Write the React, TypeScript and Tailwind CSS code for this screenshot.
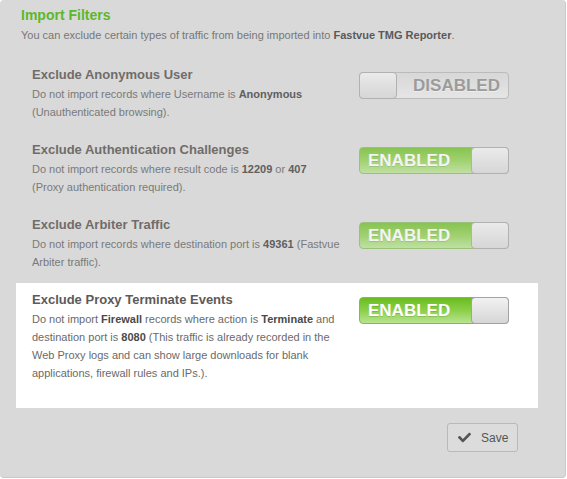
import React from 'react';
import { FaCheck } from 'react-icons/fa';

interface Filter {
  title: string;
  desc: React.ReactNode;
  enabled: boolean;
}

const filters: Filter[] = [
  {
    title: 'Exclude Anonymous User',
    desc: (
      <>
        Do not import records where Username is <b>Anonymous</b> (Unauthenticated browsing).
      </>
    ),
    enabled: false,
  },
  {
    title: 'Exclude Authentication Challenges',
    desc: (
      <>
        Do not import records where result code is <b>12209</b> or <b>407</b>
        <br />
        (Proxy authentication required).
      </>
    ),
    enabled: true,
  },
  {
    title: 'Exclude Arbiter Traffic',
    desc: (
      <>
        Do not import records where destination port is <b>49361</b> (Fastvue Arbiter traffic).
      </>
    ),
    enabled: true,
  },
  {
    title: 'Exclude Proxy Terminate Events',
    desc: (
      <>
        Do not import <b>Firewall</b> records where action is <b>Terminate</b> and destination port is{' '}
        <b>8080</b> (This traffic is already recorded in the Web Proxy logs and can show large downloads
        for blank applications, firewall rules and IPs.).
      </>
    ),
    enabled: true,
  },
];

const Knob = () => (
  <div className="w-[38px] h-[27px] -my-px rounded-[4px] border border-[#a3a3a3] bg-gradient-to-b from-[#f2f2f2] to-[#d6d6d6]" />
);

const Toggle = ({ enabled }: { enabled: boolean }) =>
  enabled ? (
    <div className="flex items-center w-[150px] h-[27px] rounded-[4px] border border-[#84b957] bg-gradient-to-b from-[#68bd1c] via-[#8ccf48] to-[#b7e48f]">
      <span className="flex-1 pl-[8px] text-[17px] leading-none font-bold text-white [text-shadow:0_1px_0_rgba(0,0,0,0.15)]">
        ENABLED
      </span>
      <div className="-mr-px">
        <Knob />
      </div>
    </div>
  ) : (
    <div className="flex items-center w-[150px] h-[27px] rounded-[4px] border border-[#b0b0b0] bg-gradient-to-b from-[#d8d8d8] to-[#ebebeb]">
      <div className="-ml-px">
        <Knob />
      </div>
      <span className="flex-1 text-right pr-[8px] text-[17px] leading-none font-bold text-[#858585] [text-shadow:0_1px_0_rgba(255,255,255,0.7)]">
        DISABLED
      </span>
    </div>
  );

const FilterRow = ({ filter, highlight }: { filter: Filter; highlight?: boolean }) => (
  <div
    className={
      highlight
        ? 'flex w-[522px] bg-white pl-4 pt-2 pb-[26px]'
        : 'flex w-[522px] h-[75px] pl-4 pt-2 opacity-[0.85]'
    }
  >
    <div className="w-[310px]">
      <div className="text-[13px] leading-[18px] font-bold text-[#5e5a57]">{filter.title}</div>
      <div className="mt-px text-[11px] leading-[18px] text-[#6a6a6a] [&_b]:text-[#4a4a4a]">
        {filter.desc}
      </div>
    </div>
    <div className={highlight ? 'ml-[17px] mt-[6px]' : 'ml-[17px] mt-[6px] opacity-[0.85]'}>
      <Toggle enabled={filter.enabled} />
    </div>
  </div>
);

export default function App() {
  return (
    <div className="w-[567px] h-[479px] bg-white font-['Liberation_Sans',Arial,sans-serif]">
      <div className="w-[566px] h-[478px] bg-[#d9d9d9] rounded-[4px] border-r border-b border-[#c9c9c9] pl-4 pt-[6px]">
        <div className="pl-[5px]">
          <h1 className="text-[14px] leading-[18px] font-bold text-[#5cb82a]">Import Filters</h1>
          <p className="mt-[2px] text-[11px] leading-[18px] text-[#777]">
            You can exclude certain types of traffic from being imported into{' '}
            <b className="text-[#5a5a5a]">Fastvue TMG Reporter</b>.
          </p>
        </div>
        <div className="mt-[14px]">
          {filters.map((f, i) => (
            <FilterRow key={f.title} filter={f} highlight={i === filters.length - 1} />
          ))}
        </div>
        <div className="flex w-[522px] justify-end pr-5 mt-[15px]">
          <button className="flex items-center gap-[10px] h-[29px] w-[71px] pl-[10px] rounded-[3px] border border-[#b9b9b9] bg-[#dcdcdc] text-[12px] text-[#555]">
            <FaCheck className="w-[13px] h-[13px] text-[#555]" />
            Save
          </button>
        </div>
      </div>
    </div>
  );
}
